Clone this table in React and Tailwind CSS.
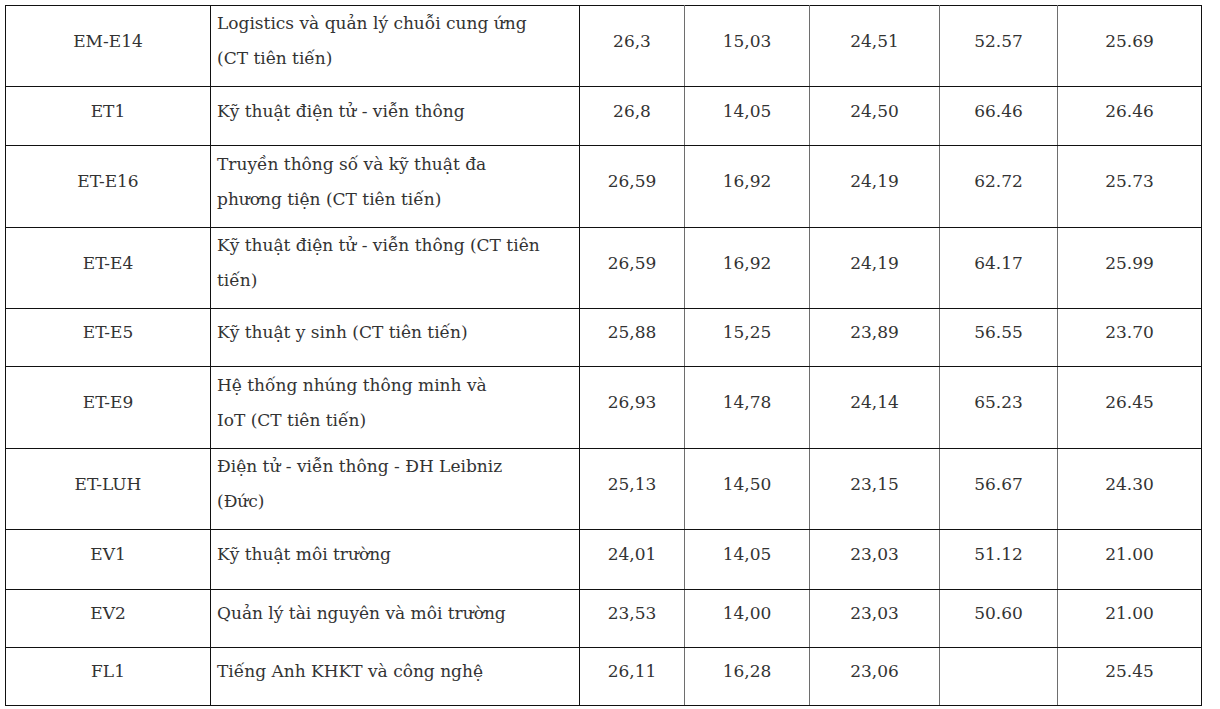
import React from 'react';

const rows = [
  { code: 'EM-E14', name: ['Logistics và quản lý chuỗi cung ứng', '(CT tiên tiến)'], h: 'h-[81px]', vals: ['26,3', '15,03', '24,51', '52.57', '25.69'] },
  { code: 'ET1', name: ['Kỹ thuật điện tử - viễn thông'], h: 'h-[59px]', vals: ['26,8', '14,05', '24,50', '66.46', '26.46'] },
  { code: 'ET-E16', name: ['Truyền thông số và kỹ thuật đa', 'phương tiện (CT tiên tiến)'], h: 'h-[82px]', vals: ['26,59', '16,92', '24,19', '62.72', '25.73'] },
  { code: 'ET-E4', name: ['Kỹ thuật điện tử - viễn thông (CT tiên', 'tiến)'], h: 'h-[81px]', vals: ['26,59', '16,92', '24,19', '64.17', '25.99'] },
  { code: 'ET-E5', name: ['Kỹ thuật y sinh (CT tiên tiến)'], h: 'h-[58px]', vals: ['25,88', '15,25', '23,89', '56.55', '23.70'] },
  { code: 'ET-E9', name: ['Hệ thống nhúng thông minh và', 'IoT (CT tiên tiến)'], h: 'h-[82px]', vals: ['26,93', '14,78', '24,14', '65.23', '26.45'] },
  { code: 'ET-LUH', name: ['Điện tử - viễn thông - ĐH Leibniz', '(Đức)'], h: 'h-[80px]', vals: ['25,13', '14,50', '23,15', '56.67', '24.30'] },
  { code: 'EV1', name: ['Kỹ thuật môi trường'], h: 'h-[60px]', vals: ['24,01', '14,05', '23,03', '51.12', '21.00'] },
  { code: 'EV2', name: ['Quản lý tài nguyên và môi trường'], h: 'h-[58px]', vals: ['23,53', '14,00', '23,03', '50.60', '21.00'] },
  { code: 'FL1', name: ['Tiếng Anh KHKT và công nghệ'], h: 'h-[58px]', vals: ['26,11', '16,28', '23,06', '', '25.45'] },
];

const cell = 'p-0 pb-[10px] align-middle [font-family:DejaVu_Serif]';

export default function App() {
  return (
    <div className="min-h-[709px] bg-white pl-[5px] pt-[5px] [font-family:DejaVu_Serif] text-[17px] leading-[35px] text-[#333]">
      <table className="w-[1196px] table-fixed border-collapse border border-[#111]">
        <colgroup>
          <col className="w-[205px]" />
          <col className="w-[369px]" />
          <col className="w-[105px]" />
          <col className="w-[125px]" />
          <col className="w-[130px]" />
          <col className="w-[118px]" />
          <col className="w-[144px]" />
        </colgroup>
        <tbody>
          {rows.map((r) => (
            <tr key={r.code} className={r.h}>
              <td className={`${cell} border border-[#111] text-center`}>{r.code}</td>
              <td className={`${cell} border border-[#111] pl-[6px]`}>
                {r.name.map((line, i) => (
                  <div key={i} className="whitespace-nowrap">{line}</div>
                ))}
              </td>
              {r.vals.map((v, i) => (
                <td
                  key={i}
                  className={`${cell} border-y border-y-[#111] border-x border-x-[#6e6e6e] text-center last:border-r-[#111]`}
                >
                  {v}
                </td>
              ))}
            </tr>
          ))}
        </tbody>
      </table>
    </div>
  );
}
